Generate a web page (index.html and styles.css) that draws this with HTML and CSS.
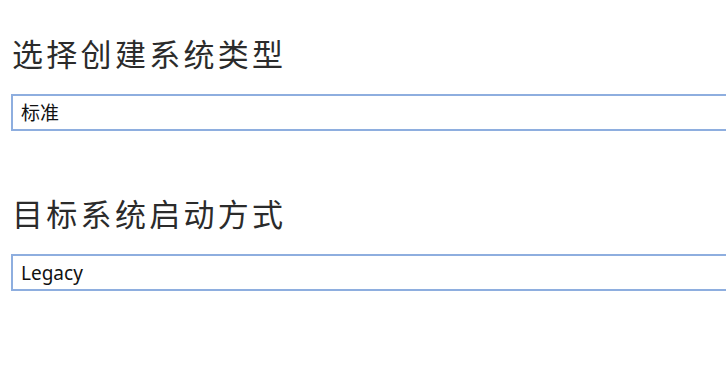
FILE: index.html
```html
<!DOCTYPE html>
<html lang="zh-CN">

<head>
    <meta charset="UTF-8" />
    <meta name="viewport" content="width=device-width, initial-scale=1.0" />
    <title>创建系统</title>
    <link rel="stylesheet" href="styles.css">
</head>

<body>
    <div class="setup">
        <div class="group">
            <h2>选择创建系统类型</h2>
            <select class="choice" id="sys-type">
                <option value="standard">标准</option>
            </select>
        </div>

        <div class="group">
            <h2>目标系统启动方式</h2>
            <select class="choice" id="boot-mode">
                <option value="legacy">Legacy</option>
            </select>
        </div>
    </div>
</body>

</html>
```

FILE: styles.css
```css
html,
body {
    margin: 0;
    padding: 0;
    background: #ffffff;
    overflow: hidden;
}

body {
    font-family: "Noto Sans", "Noto Sans CJK SC", sans-serif;
}

.setup {
    padding: 30px 0 0 11px;
}

.group {
    margin-bottom: 59px;
}

.group h2 {
    margin: 0 0 18px 1px;
    font-family: "Noto Sans CJK SC", sans-serif;
    font-size: 31px;
    font-weight: 400;
    letter-spacing: 3.3px;
    line-height: 46px;
    color: #2b2b2b;
}

.choice {
    display: block;
    width: 760px;
    height: 37px;
    margin: 0;
    padding: 0 8px;
    border: 2px solid #8eaedf;
    border-radius: 0;
    background: #ffffff;
    font-family: "Noto Sans", "Noto Sans CJK SC", sans-serif;
    font-size: 19px;
    color: #111111;
    appearance: none;
    -webkit-appearance: none;
}
```
